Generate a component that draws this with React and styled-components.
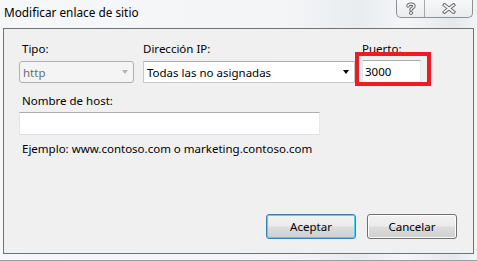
import React from 'react'
import styled, { createGlobalStyle } from 'styled-components'

const GlobalStyle = createGlobalStyle`
    body {
        margin: 0;
        font-family: "Noto Sans", "Open Sans", sans-serif;
        font-size: 11.5px;
        color: #000;
    }
`

const Window = styled.div`
    width: 477px;
    height: 261px;
    box-sizing: border-box;
    display: flex;
    flex-direction: column;
    background: linear-gradient(90deg, #f6f7f9 0%, #f3f5f7 60%, #e9ecef 75%, #f4f6f8 85%, #e6e9ec 95%, #f2f4f6 100%);
    border-bottom: 1px solid #9a9fa5;
`

const TitleBar = styled.div`
    height: 28px;
    display: flex;
    justify-content: space-between;
    align-items: flex-start;
    padding: 0 4px 0 4px;
    flex-shrink: 0;
`

const Title = styled.div`
    padding-top: 4px;
    font-size: 11.8px;
    color: #000;
`

const CaptionButtons = styled.div`
    display: flex;
    height: 17px;
    border: 1px solid #8d9095;
    border-top: none;
    border-radius: 0 0 5px 5px;
    overflow: hidden;
    background: linear-gradient(#f7f8f9, #e9ebed);
`

const CaptionButton = styled.div`
    width: ${p => p.$w}px;
    display: flex;
    align-items: center;
    justify-content: center;
    border-left: ${p => (p.$divider ? '1px solid #a5a8ad' : 'none')};
`

const Client = styled.div`
    flex: 1;
    margin: 0 3px 6px 3px;
    border: 1px solid #6f7377;
    background: #f0f0f0;
    display: flex;
    flex-direction: column;
    padding: 12px 16px 14px 15px;
`

const FieldsRow = styled.div`
    display: flex;
    align-items: flex-start;
`

const Field = styled.div`
    display: flex;
    flex-direction: column;
    gap: ${p => p.$gap || 4}px;
    margin-right: ${p => p.$mr || 0}px;
`

const Label = styled.div`
    height: 16px;
    line-height: 16px;
    padding-left: ${p => p.$indent || 0}px;
    white-space: nowrap;
`

const Combo = styled.div`
    width: ${p => p.$w}px;
    height: 22px;
    box-sizing: border-box;
    display: flex;
    align-items: center;
    justify-content: space-between;
    padding: 0 5px 0 3px;
    border: 1px solid ${p => (p.$disabled ? '#adb2b5' : '#c6cacf')};
    border-top-color: ${p => (p.$disabled ? '#adb2b5' : '#abadb3')};
    border-radius: ${p => (p.$disabled ? 3 : 1)}px;
    background: ${p => (p.$disabled ? '#f4f4f4' : '#fff')};
    color: ${p => (p.$disabled ? '#6d6d6d' : '#000')};
    white-space: nowrap;
`

const Arrow = styled.div`
    width: 0;
    height: 0;
    border-left: 3.5px solid transparent;
    border-right: 3.5px solid transparent;
    border-top: 4px solid ${p => (p.$disabled ? '#b4b4b4' : '#000')};
`

const TextBox = styled.div`
    width: ${p => p.$w}px;
    height: ${p => p.$h || 22}px;
    box-sizing: border-box;
    display: flex;
    align-items: center;
    padding-left: 2px;
    background: #fff;
    border: 1px solid #dbdfe6;
    border-top-color: #abadb3;
    border-left-color: #e2e3ea;
    border-right-color: #e3e9ef;
`

const PortBox = styled.div`
    position: relative;
`

const Highlight = styled.div`
    position: absolute;
    left: -7px;
    top: -8px;
    width: 76px;
    height: 34px;
    box-sizing: border-box;
    border: 4px solid #ed1c24;
`

const HostField = styled(Field)`
    margin-top: 10px;
`

const Example = styled.div`
    margin-top: 6px;
    padding-left: 3px;
    line-height: 16px;
`

const Footer = styled.div`
    margin-top: auto;
    display: flex;
    justify-content: flex-end;
    gap: 11px;
`

const Button = styled.div`
    width: 90px;
    height: 25px;
    box-sizing: border-box;
    display: flex;
    align-items: center;
    justify-content: center;
    border-radius: 3px;
    border: 1px solid ${p => (p.$default ? '#3c7fb1' : '#707070')};
    box-shadow: inset 0 0 0 1px ${p => (p.$default ? '#48d4f7' : '#fcfcfc')};
    background: linear-gradient(#f2f2f2 0%, #ebebeb 48%, #dddddd 52%, #cfcfcf 100%);
`

const HelpIcon = () => (
    <svg width="12" height="13" viewBox="0 0 12 13">
        <g fill="none" strokeLinecap="round" strokeLinejoin="round">
            <path d="M3 4 C3 1.5 9 1.5 9 4 C9 6 6 6 6 8" stroke="#6b6e73" strokeWidth="3.4" />
            <path d="M3 4 C3 1.5 9 1.5 9 4 C9 6 6 6 6 8" stroke="#fafafa" strokeWidth="1.4" />
            <circle cx="6" cy="11" r="1.6" fill="#fafafa" stroke="#6b6e73" strokeWidth="1" />
        </g>
    </svg>
)

const CloseIcon = () => (
    <svg width="14" height="11" viewBox="0 0 14 11">
        <g fill="none" strokeLinecap="square">
            <path d="M2.5 2 L11.5 9 M11.5 2 L2.5 9" stroke="#6b6e73" strokeWidth="3.6" />
            <path d="M2.5 2 L11.5 9 M11.5 2 L2.5 9" stroke="#fafafa" strokeWidth="1.6" />
        </g>
    </svg>
)

const App = () => {
    return (
        <>
            <GlobalStyle />
            <Window>
                <TitleBar>
                    <Title>Modificar enlace de sitio</Title>
                    <CaptionButtons>
                        <CaptionButton $w={27}><HelpIcon /></CaptionButton>
                        <CaptionButton $w={47} $divider><CloseIcon /></CaptionButton>
                    </CaptionButtons>
                </TitleBar>
                <Client>
                    <FieldsRow>
                        <Field $mr={9}>
                            <Label $indent={3}>Tipo:</Label>
                            <Combo $w={115} $disabled>
                                http
                                <Arrow $disabled />
                            </Combo>
                        </Field>
                        <Field $mr={7}>
                            <Label>Dirección IP:</Label>
                            <Combo $w={212}>
                                Todas las no asignadas
                                <Arrow />
                            </Combo>
                        </Field>
                        <Field $gap={3}>
                            <Label>Puerto:</Label>
                            <PortBox>
                                <TextBox $w={59} $h={23}>3000</TextBox>
                                <Highlight />
                            </PortBox>
                        </Field>
                    </FieldsRow>
                    <HostField $gap={3}>
                        <Label $indent={3}>Nombre de host:</Label>
                        <TextBox $w={301} $h={23} />
                    </HostField>
                    <Example>Ejemplo: www.contoso.com o marketing.contoso.com</Example>
                    <Footer>
                        <Button $default>Aceptar</Button>
                        <Button>Cancelar</Button>
                    </Footer>
                </Client>
            </Window>
        </>
    )
}

export default App
